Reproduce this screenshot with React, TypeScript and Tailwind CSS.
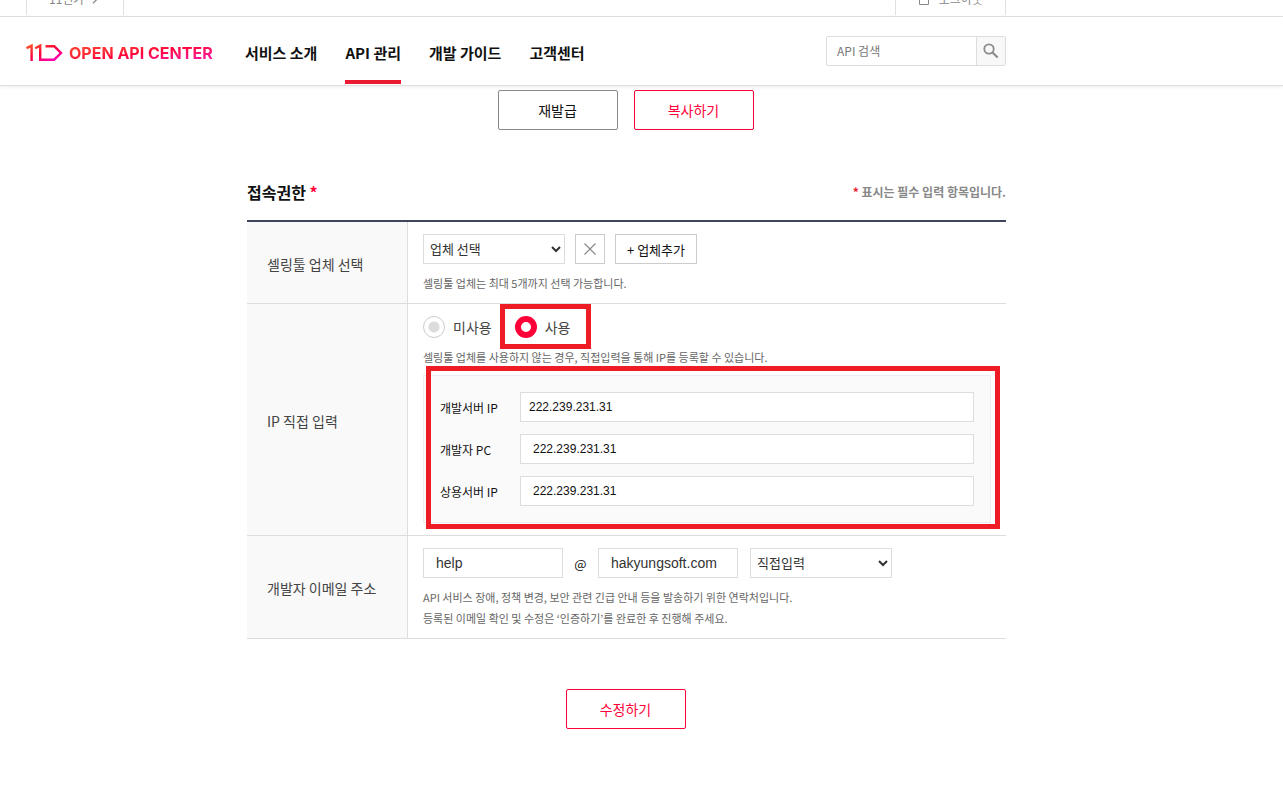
import React from "react";

const NAV = [
  { label: "서비스 소개", active: false },
  { label: "API 관리", active: true },
  { label: "개발 가이드", active: false },
  { label: "고객센터", active: false },
];

const IP_FIELDS = [
  { id: "ip-dev-server", label: "개발서버 IP", value: "222.239.231.31", pad: "pl-2" },
  { id: "ip-dev-pc", label: "개발자 PC", value: "222.239.231.31", pad: "pl-3" },
  { id: "ip-live-server", label: "상용서버 IP", value: "222.239.231.31", pad: "pl-3" },
];

function TopBar() {
  return (
    <div className="h-[17px] overflow-hidden border-b border-[#e1e1e1]">
      <div className="ml-[26px] flex h-[15px] max-w-[980px] items-end justify-between text-[12px] leading-[18px] text-[#888]">
        <a href="#" className="flex h-[30px] items-center gap-2 border-x border-[#e1e1e1] pr-[25px] pb-[2px] pl-[22px]">
          11번가
          <svg width="6" height="9" viewBox="0 0 6 9" fill="none" stroke="#888" strokeWidth="1.2" aria-hidden="true">
            <path d="M1 0.8 4.8 4.5 1 8.2" />
          </svg>
        </a>
        <a href="#" className="flex h-[30px] items-center gap-[10px] border-x border-[#e1e1e1] pr-[22px] pb-[2px] pl-[23px]">
          <svg width="10" height="12" viewBox="0 0 10 12" fill="none" stroke="#888" aria-hidden="true">
            <path d="M0.5 5.5h9v6h-9zM2.5 5.5V3a2.5 2.5 0 0 1 5 0v2.5" />
          </svg>
          로그아웃
        </a>
      </div>
    </div>
  );
}

function Logo() {
  return (
    <a href="#" className="flex w-[219px] shrink-0 items-center gap-[6px] pt-1">
      <svg width="37" height="18" viewBox="0 0 37 18" fill="none" aria-hidden="true">
        <defs>
          <linearGradient id="mark" x1="10" y1="0" x2="18" y2="20" gradientUnits="userSpaceOnUse">
            <stop offset="0" stopColor="#ff4a2d" />
            <stop offset="0.5" stopColor="#ff0038" />
            <stop offset="1" stopColor="#ff00b8" />
          </linearGradient>
        </defs>
        <path
          d="M0.5 4.2 5.6 1.6V17M9.2 4.2 14.2 1.6V15.7H28.2L35 9 28.2 2.2H19.5"
          stroke="url(#mark)"
          strokeWidth="2.4"
        />
      </svg>
      <span className="bg-linear-to-br from-[#ff4a2d] via-[#ff0038] to-[#ff00b8] bg-clip-text font-['Inter',sans-serif] text-[16px] leading-5 font-bold whitespace-nowrap text-transparent">
        OPEN API CENTER
      </span>
    </a>
  );
}

function Header() {
  return (
    <header className="border-b border-[#ddd] shadow-[0_1px_4px_rgba(0,0,0,0.08)]">
      <div className="ml-[26px] flex h-[68px] max-w-[980px] items-center">
        <Logo />
        <nav className="flex h-full gap-7 self-start">
          {NAV.map((n) => (
            <a
              key={n.label}
              href="#"
              className={
                n.active
                  ? "mb-px flex items-center border-b-4 border-[#ea1a31] pt-[9px] text-[15px] font-bold whitespace-nowrap text-[#111]"
                  : "mb-px flex items-center border-b-4 border-transparent pt-[9px] text-[15px] font-bold whitespace-nowrap text-[#111]"
              }
            >
              {n.label}
            </a>
          ))}
        </nav>
        <form className="ml-auto flex h-[30px] w-[180px] rounded-[2px] border border-[#ddd]">
          <input
            aria-label="API 검색"
            placeholder="API 검색"
            className="min-w-0 flex-1 px-[10px] text-[12px] outline-none placeholder:text-[#777]"
          />
          <button type="button" aria-label="검색" className="flex w-[29px] items-center justify-center border-l border-[#ddd] bg-[#f8f8f8]">
            <svg width="16" height="16" viewBox="0 0 16 16" fill="none" stroke="#8b8b8b" aria-hidden="true">
              <circle cx="6" cy="6" r="4.7" strokeWidth="1.8" />
              <path d="m9.5 9.5 5.2 5" strokeWidth="2.2" />
            </svg>
          </button>
        </form>
      </div>
    </header>
  );
}

function Row({ title, children }: { title: string; children: React.ReactNode }) {
  return (
    <tr>
      <th scope="row" className="w-[161px] border-r border-b border-[#ddd] bg-[#f9f9f9] pt-[3px] pl-5 text-left align-middle text-[14px] font-normal text-[#444]">
        {title}
      </th>
      <td className="border-b border-[#ddd] pt-3 pl-[15px] align-top">{children}</td>
    </tr>
  );
}

function Hint({ children }: { children: React.ReactNode }) {
  return <p className="text-[11px] leading-[21px] text-[#666]">{children}</p>;
}

function Radio({ id, label, checked }: { id: string; label: string; checked?: boolean }) {
  return (
    <label htmlFor={id} className="flex items-center gap-2 text-[14px] leading-[22px] text-[#444]">
      <input
        id={id}
        type="radio"
        name="direct-ip"
        defaultChecked={checked}
        className="size-[22px] appearance-none rounded-full border border-[#ccc] bg-[radial-gradient(circle,#dcdcdc_5px,#fff_6px)] checked:border-[6px] checked:border-[#ff0038] checked:bg-white checked:bg-none"
      />
      {label}
    </label>
  );
}

export default function App() {
  return (
    <div className="bg-white font-['Noto_Sans_CJK_KR',sans-serif] text-[#111]">
      <TopBar />
      <Header />
      <main className="ml-[26px] max-w-[980px] pl-[221px]">
        <div className="flex justify-center gap-4 pt-1 pr-[2px]">
          <button className="h-10 w-[120px] rounded-[2px] border border-[#888] text-[14px]">재발급</button>
          <button className="h-10 w-[120px] rounded-[2px] border border-[#ff0038] text-[14px] text-[#ff0038]">복사하기</button>
        </div>

        <div className="flex items-center justify-between pt-[50px] pb-4">
          <h2 className="text-[16px] leading-6 font-bold">
            접속권한 <span className="text-[#ff0038]">*</span>
          </h2>
          <p className="text-[12px] leading-6 font-bold text-[#888]">
            <span className="text-[#ea1a31]">*</span> 표시는 필수 입력 항목입니다.
          </p>
        </div>

        <table className="w-full border-separate border-spacing-0 border-t-2 border-[#40455f]">
          <tbody>
            <Row title="셀링툴 업체 선택">
              <div className="flex gap-[10px]">
                <select aria-label="업체 선택" className="h-[30px] w-[142px] border border-[#ddd] bg-white pr-1 pb-[2px] pl-[2px] text-[13px] text-[#333]">
                  <option>업체 선택</option>
                </select>
                <button aria-label="삭제" className="flex size-[30px] items-center justify-center border border-[#ccc]">
                  <svg width="12" height="12" viewBox="0 0 12 12" stroke="#888" strokeWidth="1.1" aria-hidden="true">
                    <path d="m0.5 0.5 11 11M11.5 0.5l-11 11" />
                  </svg>
                </button>
                <button className="h-[30px] w-[82px] border border-[#ccc] pt-[2px] text-[13px]">+ 업체추가</button>
              </div>
              <div className="pt-[9px] pb-[9px]">
                <Hint>셀링툴 업체는 최대 5개까지 선택 가능합니다.</Hint>
              </div>
            </Row>

            <Row title="IP 직접 입력">
              <div className="flex">
                <Radio id="ip-off" label="미사용" />
                <div className="relative ml-[23px]">
                  <Radio id="ip-on" label="사용" checked />
                  <div className="pointer-events-none absolute -top-3 -left-[15px] h-[45px] w-[91px] border-[5px] border-[#ee1c24]" />
                </div>
              </div>
              <div className="pt-[9px]">
                <Hint>셀링툴 업체를 사용하지 않는 경우, 직접입력을 통해 IP를 등록할 수 있습니다.</Hint>
              </div>
              <div className="relative mt-[7px] mr-[15px] mb-3 flex flex-col gap-3 border border-[#eee] bg-[#fafafa] p-4">
                {IP_FIELDS.map((f) => (
                  <div key={f.id} className="flex items-center">
                    <label htmlFor={f.id} className="w-20 shrink-0 pt-[2px] text-[12px] leading-5">
                      {f.label}
                    </label>
                    <input
                      id={f.id}
                      defaultValue={f.value}
                      className={`h-[30px] min-w-0 flex-1 border border-[#ddd] bg-white font-['Liberation_Sans',sans-serif] text-[12px] ${f.pad}`}
                    />
                  </div>
                ))}
                <div className="pointer-events-none absolute -top-[10px] -right-[10px] -bottom-[7px] left-[2px] border-[5px] border-[#ee1c24]" />
              </div>
            </Row>

            <Row title="개발자 이메일 주소">
              <div className="flex items-center">
                <input aria-label="이메일 아이디" defaultValue="help" className="h-[30px] w-[140px] border border-[#ddd] px-3 font-['Liberation_Sans',sans-serif] text-[14px] text-[#333]" />
                <span className="w-[35px] pt-[2px] text-center text-[13px]">@</span>
                <input aria-label="이메일 도메인" defaultValue="hakyungsoft.com" className="h-[30px] w-[140px] border border-[#ddd] px-3 font-['Liberation_Sans',sans-serif] text-[14px] text-[#333]" />
                <select aria-label="도메인 선택" className="ml-3 h-[30px] w-[142px] border border-[#ddd] bg-white pr-1 pb-[2px] pl-[2px] text-[13px] text-[#333]">
                  <option>직접입력</option>
                </select>
              </div>
              <div className="pt-[9px] pb-[9px]">
                <Hint>API 서비스 장애, 정책 변경, 보안 관련 긴급 안내 등을 발송하기 위한 연락처입니다.</Hint>
                <Hint>등록된 이메일 확인 및 수정은 ‘인증하기’를 완료한 후 진행해 주세요.</Hint>
              </div>
            </Row>
          </tbody>
        </table>

        <div className="flex justify-center pt-[50px] pr-[2px] pb-16">
          <button className="h-10 w-[120px] rounded-[2px] border border-[#ff0038] text-[14px] text-[#ff0038]">수정하기</button>
        </div>
      </main>
    </div>
  );
}
